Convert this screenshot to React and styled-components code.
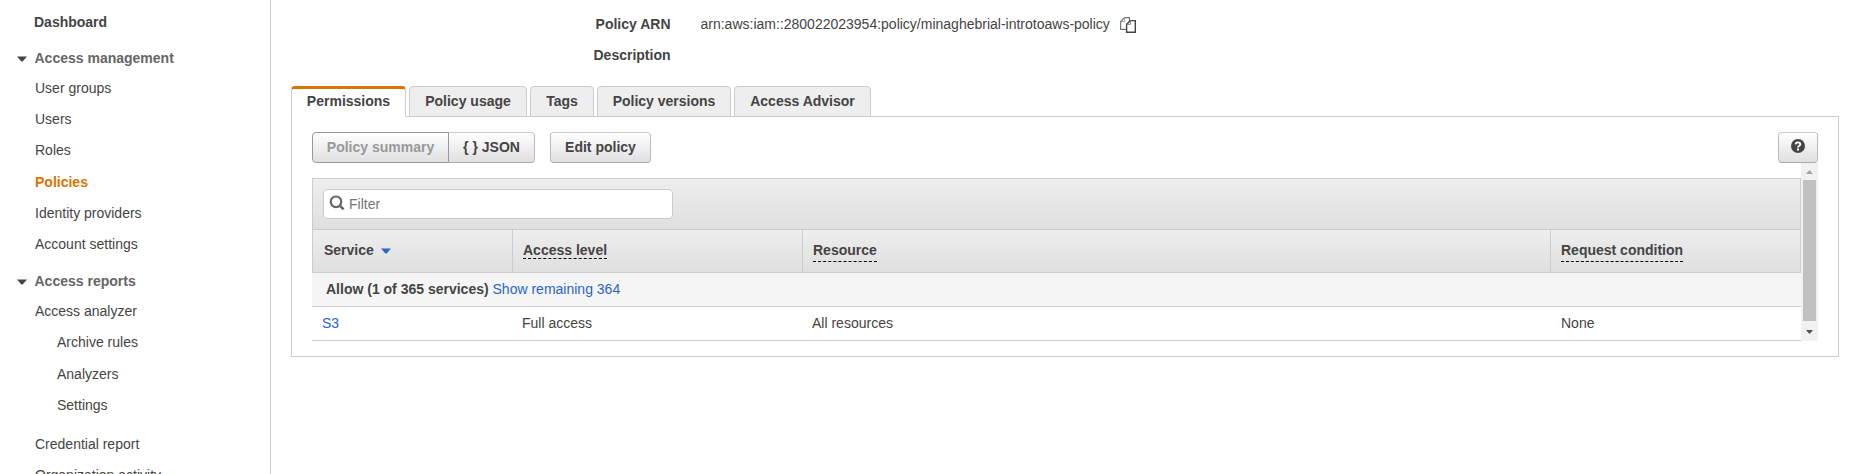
import React from "react";
import styled, { createGlobalStyle, css } from "styled-components";

const Global = createGlobalStyle`
  * { box-sizing: border-box; }
  html, body { margin: 0; overflow: hidden; }
  body { background: #fff; color: #444; font: 14px/20px "Liberation Sans", Arial, sans-serif; }
`;

const Page = styled.div`
  display: flex;
  height: 474px;
  overflow: hidden;
`;

const Sidebar = styled.nav`
  flex: none;
  width: 271px;
  height: 474px;
  overflow: hidden;
  border-right: 1px solid #ccc;
`;

const NavHome = styled.div`
  padding: 12px 0 0 34px;
  font-weight: bold;
`;

const NavGroup = styled.section`
  padding-top: ${(p) => p.$top}px;
`;

const NavHeading = styled.h2`
  display: flex;
  align-items: center;
  gap: 7.5px;
  margin: 0 0 5px;
  padding-left: 17px;
  font-size: 14px;
  line-height: 20px;
  color: #666;
`;

const Caret = styled.svg`
  display: block;
  flex: none;
  width: 10px;
  height: 6px;
  position: relative;
  top: 1px;
  fill: ${(p) => p.$color || "#444"};
`;

const NavItem = styled.div`
  height: 31px;
  margin-top: ${(p) => (p.$spaced ? 1 : 0)}px;
  padding-left: ${(p) => (p.$nested ? 57 : 35)}px;
  line-height: 30px;
  white-space: nowrap;
  ${(p) => p.$active && css`
    color: #d97500;
    font-weight: bold;
  `}
`;

const NavGap = styled.div`
  height: 8px;
`;

const Main = styled.main`
  flex: 1;
  min-width: 0;
  padding: 14px 13px 0 20px;
`;

const Details = styled.dl`
  display: grid;
  grid-template-columns: 379.5px 1fr;
  row-gap: 11px;
  column-gap: 30px;
  margin: 0 0 21px;
`;

const Term = styled.dt`
  font-weight: bold;
  text-align: right;
`;

const Value = styled.dd`
  display: flex;
  gap: 10px;
  margin: 0;
`;

const Tabs = styled.div`
  display: flex;
  gap: 3px;
  margin-bottom: -1px;
`;

const Tab = styled.div`
  height: 31px;
  width: ${(p) => p.$w}px;
  text-align: center;
  white-space: nowrap;
  border: 1px solid #ccc;
  border-radius: 4px 4px 0 0;
  background: #eee;
  font-weight: bold;
  line-height: 29px;
  ${(p) => p.$active && css`
    position: relative;
    background: #fff;
    border-bottom-color: #fff;
    border-top: 3px solid #d97500;
    line-height: 25px;
  `}
`;

const Panel = styled.div`
  height: 241px;
  border: 1px solid #ccc;
  padding: 15px 20px 0;
`;

const Toolbar = styled.div`
  display: flex;
`;

const Button = styled.button`
  display: flex;
  align-items: center;
  justify-content: center;
  width: ${(p) => p.$w}px;
  height: 31px;
  padding: 0 0 1px;
  border: 1px solid;
  border-color: #ccc #bbb #aaa;
  border-radius: 4px;
  background: linear-gradient(#fff, #e0e0e0);
  color: #444;
  font: bold 14px/20px "Liberation Sans", Arial, sans-serif;
  ${(p) => p.$pressed && css`
    border-color: #999;
    border-radius: 4px 0 0 4px;
    color: #999;
  `}
  ${(p) => p.$joined && css`
    border-left: 0;
    border-radius: 0 4px 4px 0;
  `}
  ${(p) => p.$spaced && css`margin-left: 15px;`}
  ${(p) => p.$end && css`margin-left: auto;`}
`;

const Scroller = styled.div`
  display: flex;
  height: 178px;
`;

const Grid = styled.div`
  flex: 1;
  padding-top: 15px;
`;

const FilterBar = styled.div`
  height: 51px;
  padding: 10px;
  border: 1px solid #ccc;
  border-bottom: 0;
  background: linear-gradient(#eee, #dfdfdf);
`;

const FilterBox = styled.div`
  display: flex;
  align-items: center;
  gap: 4px;
  width: 350px;
  height: 30px;
  padding-left: 5px;
  border: 1px solid #ccc;
  border-radius: 4px;
  background: #fff;
  color: #757575;
`;

const columns = "200px 290px 748px 1fr";

const HeadRow = styled.div`
  display: grid;
  grid-template-columns: ${columns};
  height: 44px;
  border: 1px solid #ccc;
  background: linear-gradient(#eee, #dfdfdf);
  font-weight: bold;
`;

const HeadCell = styled.div`
  display: flex;
  align-items: flex-start;
  gap: 7px;
  padding: 10px 0 0 ${(p) => (p.$first ? 11 : 10)}px;
  border-right: 1px solid #ccc;
  &:last-child { border-right: 0; }
`;

const Hint = styled.span`
  height: ${(p) => p.$h}px;
  border-bottom: 1px dashed #000;
`;

const SortCaret = styled(Caret)`
  top: 8px;
`;

const GroupRow = styled.div`
  height: 34px;
  padding: 6px 0 0 14px;
  border-bottom: 1px solid #ccc;
  background: #f5f5f5;
  line-height: 20px;
`;

const DataRow = styled.div`
  display: grid;
  grid-template-columns: ${columns};
  height: 34px;
  padding-top: 6px;
  border-bottom: 1px solid #ccc;
`;

const DataCell = styled.div`
  padding-left: ${(p) => p.$pad || 10}px;
`;

const Link = styled.a`
  color: #2a65c8;
`;

const ScrollTrack = styled.div`
  display: flex;
  flex-direction: column;
  align-items: center;
  width: 17px;
  padding: 7px 0;
  background: #f1f1f1;
`;

const ScrollThumb = styled.div`
  width: 13px;
  height: 141px;
  margin: 6px 0 9px;
  background: #c1c1c1;
`;

const ScrollArrow = styled.svg`
  display: block;
  width: 7px;
  height: 4px;
  fill: ${(p) => p.$color};
`;

const CopyGlyph = styled.svg`
  width: 16px;
  height: 16px;
  margin-top: 3px;
`;

const SearchGlyph = styled.svg`
  width: 16px;
  height: 16px;
  margin-bottom: 2px;
`;

const HelpGlyph = styled.svg`
  width: 14px;
  height: 14px;
  margin-bottom: 2px;
`;

const accessItems = ["User groups", "Users", "Roles", "Policies", "Identity providers", "Account settings"];

const CaretPath = () => <path d="M0 0.5H10L5.8 5.3Q5 6 4.2 5.3Z" />;

export default function App() {
  return (
    <Page>
      <Global />
      <Sidebar>
        <NavHome>Dashboard</NavHome>
        <NavGroup $top={16}>
          <NavHeading><Caret viewBox="0 0 10 6"><CaretPath /></Caret>Access management</NavHeading>
          {accessItems.map((t) => (
            <NavItem key={t} $active={t === "Policies"} $spaced={t === "Policies"}>{t}</NavItem>
          ))}
        </NavGroup>
        <NavGroup $top={11}>
          <NavHeading><Caret viewBox="0 0 10 6"><CaretPath /></Caret>Access reports</NavHeading>
          <NavItem>Access analyzer</NavItem>
          <NavItem $nested>Archive rules</NavItem>
          <NavItem $nested $spaced>Analyzers</NavItem>
          <NavItem $nested>Settings</NavItem>
          <NavGap />
          <NavItem>Credential report</NavItem>
          <NavItem>Organization activity</NavItem>
        </NavGroup>
      </Sidebar>
      <Main>
        <Details>
          <Term>Policy ARN</Term>
          <Value>
            arn:aws:iam::280022023954:policy/minaghebrial-introtoaws-policy
            <CopyGlyph viewBox="0 0 16 16" fill="#fff" strokeWidth="1.2">
              <path d="M4.6 0.6H9.4V12.4H0.6V4.6Z" stroke="#777" />
              <path d="M4.6 0.6V4.6H0.6" fill="none" stroke="#999" strokeWidth="0.9" />
              <path d="M10.4 3.6H15.3V15.3H6.6V7.4Z" stroke="#444" strokeWidth="1.4" />
              <path d="M10.4 3.6V7.4H6.6" fill="none" stroke="#777" strokeWidth="0.9" />
            </CopyGlyph>
          </Value>
          <Term>Description</Term>
        </Details>
        <Tabs>
          <Tab $w={115} $active>Permissions</Tab>
          <Tab $w={118}>Policy usage</Tab>
          <Tab $w={64}>Tags</Tab>
          <Tab $w={134}>Policy versions</Tab>
          <Tab $w={137}>Access Advisor</Tab>
        </Tabs>
        <Panel>
          <Toolbar>
            <Button $w={137} $pressed>Policy summary</Button>
            <Button $w={86} $joined>{"{ } JSON"}</Button>
            <Button $w={101} $spaced>Edit policy</Button>
            <Button $w={40} $end aria-label="Help">
              <HelpGlyph viewBox="0 0 14 14">
                <circle cx="7" cy="7" r="7" fill="#444" />
                <path d="M4.6 5.3Q4.8 3.4 7 3.4T9.3 5.2Q9.3 6.3 8 7Q7 7.5 7 8.6" fill="none" stroke="#fff" strokeWidth="1.9" />
                <rect x="6" y="9.5" width="2" height="2" fill="#fff" />
              </HelpGlyph>
            </Button>
          </Toolbar>
          <Scroller>
            <Grid>
              <FilterBar>
                <FilterBox>
                  <SearchGlyph viewBox="0 0 16 16" fill="none" stroke="#666" strokeWidth="2.2">
                    <circle cx="7" cy="6.8" r="5.3" />
                    <path d="M10.8 10.6L14.6 14.4" strokeWidth="2.6" />
                  </SearchGlyph>
                  Filter
                </FilterBox>
              </FilterBar>
              <HeadRow>
                <HeadCell $first>Service<SortCaret $color="#2a65c8" viewBox="0 0 10 6"><CaretPath /></SortCaret></HeadCell>
                <HeadCell><Hint $h={19}>Access level</Hint></HeadCell>
                <HeadCell><Hint $h={22}>Resource</Hint></HeadCell>
                <HeadCell><Hint $h={22}>Request condition</Hint></HeadCell>
              </HeadRow>
              <GroupRow><b>Allow (1 of 365 services)</b> <Link>Show remaining 364</Link></GroupRow>
              <DataRow>
                <DataCell><Link>S3</Link></DataCell>
                <DataCell>Full access</DataCell>
                <DataCell>All resources</DataCell>
                <DataCell $pad={11}>None</DataCell>
              </DataRow>
            </Grid>
            <ScrollTrack>
              <ScrollArrow viewBox="0 0 7 4" $color="#a3a3a3"><path d="M0 4L3.5 0L7 4Z" /></ScrollArrow>
              <ScrollThumb />
              <ScrollArrow viewBox="0 0 7 4" $color="#505050"><path d="M0 0H7L3.5 4Z" /></ScrollArrow>
            </ScrollTrack>
          </Scroller>
        </Panel>
      </Main>
    </Page>
  );
}
